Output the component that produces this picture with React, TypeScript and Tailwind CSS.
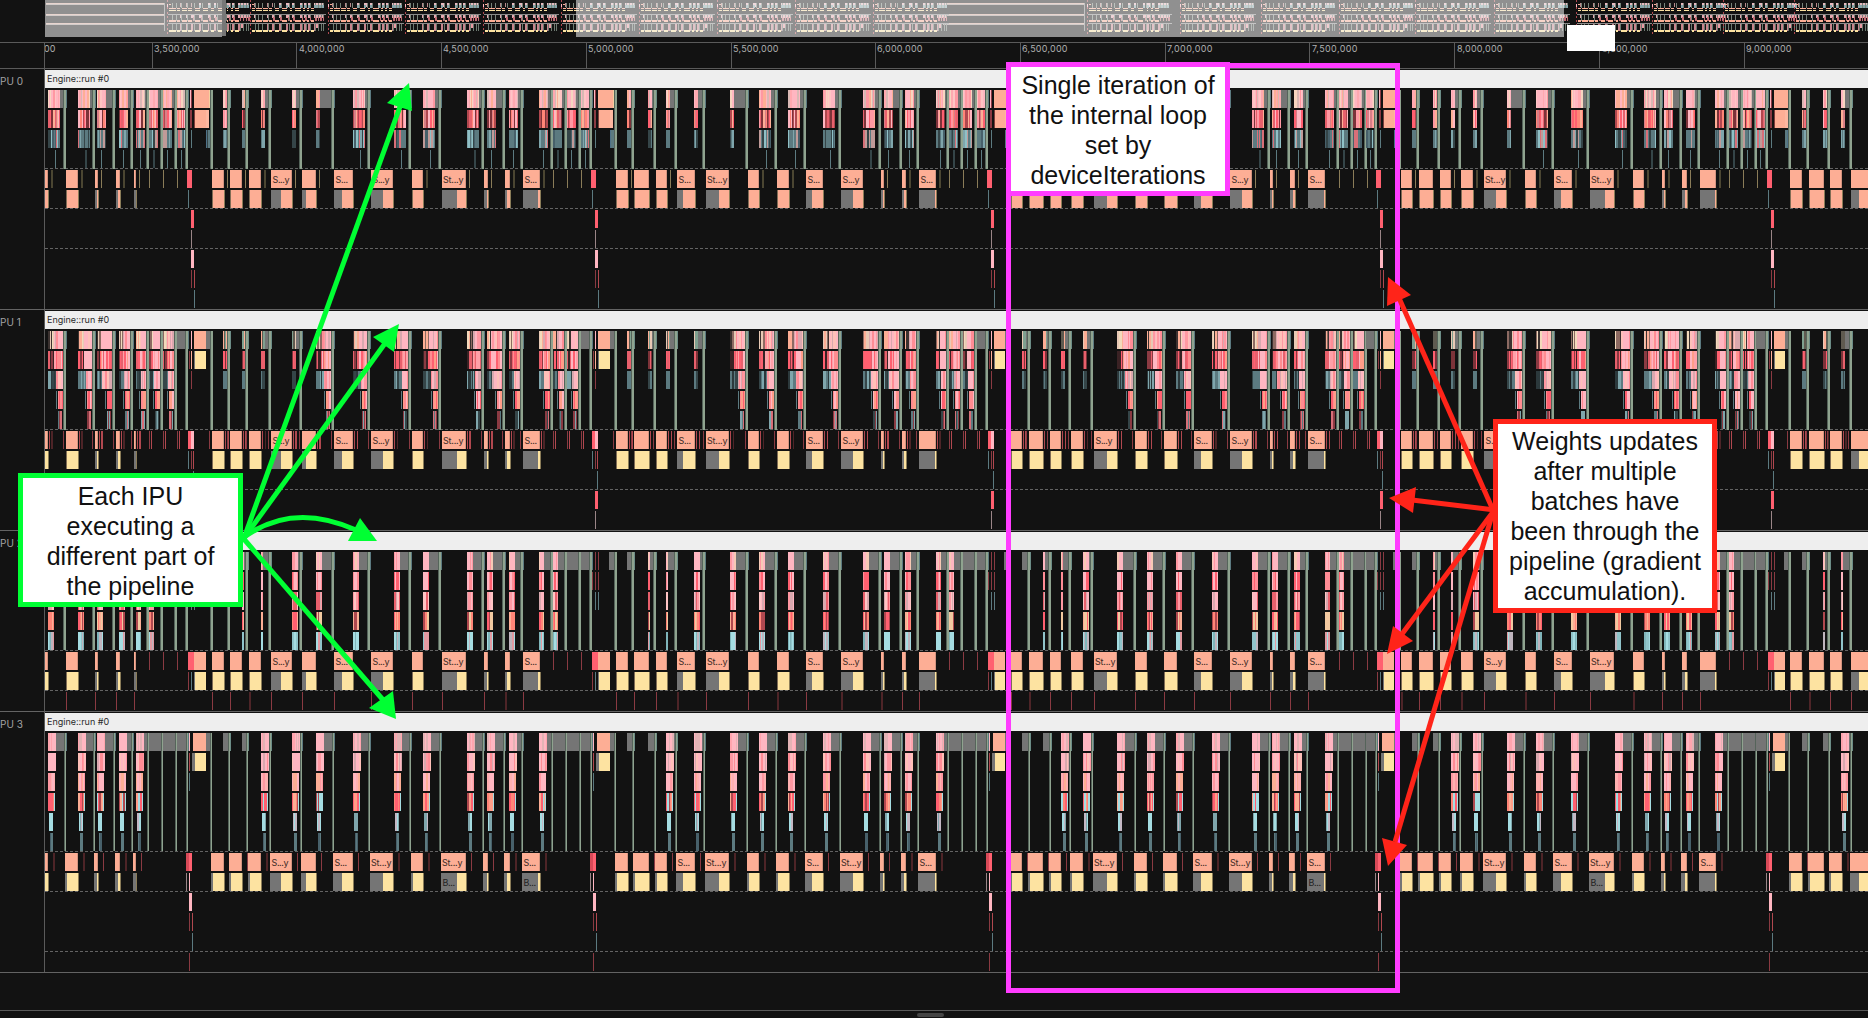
import React from 'react';

const C = {
  orange: '#fdae95',
  cream: '#fde3a1',
  gray: '#757575',
  green: '#8fa38f',
  greenDark: '#55645a',
  pink: '#ffb6c1',
  red: '#ff6070',
  teal: '#5c7a80',
  darkTeal: '#354548',
  cyan: '#a5dde2',
  darkRed: '#8a3a42',
  maroon: '#4d2427',
  olive: '#8a7c58',
  darkOlive: '#4b4632',
  bg: '#121212',
};

const FONT = 'Inter, "Liberation Sans", sans-serif';

// [position in the iteration, start, sync end]
type Slot = [number, number, number];
const SLOTS: Slot[] = [
  [7, 48, 66], [8, 78, 95], [9, 97, 115], [10, 119, 133], [11, 136, 149], [12, 149, 163], [13, 163, 177], [14, 177, 188],
  [0, 223, 230], [1, 242, 248], [2, 261, 271], [3, 292, 302], [4, 316, 334], [5, 353, 370], [6, 394, 411], [7, 423, 441],
  [8, 467, 484], [9, 487, 505], [10, 509, 523], [11, 539, 553], [12, 553, 567], [13, 567, 581], [14, 581, 592],
  [0, 627, 634], [1, 648, 656], [2, 666, 677], [3, 694, 705], [4, 730, 748], [5, 759, 777], [6, 788, 806], [7, 823, 841],
  [8, 863, 881], [9, 884, 902], [10, 905, 919], [11, 936, 949], [12, 949, 963], [13, 963, 977], [14, 977, 988],
  [0, 1022, 1030], [1, 1043, 1051], [2, 1061, 1071], [3, 1083, 1093], [4, 1117, 1136], [5, 1147, 1165], [6, 1176, 1194], [7, 1212, 1230],
  [8, 1252, 1270], [9, 1272, 1290], [10, 1294, 1308], [11, 1325, 1339], [12, 1339, 1353], [13, 1353, 1367], [14, 1366, 1377],
  [0, 1412, 1419], [1, 1433, 1440], [2, 1451, 1461], [3, 1473, 1483], [4, 1507, 1525], [5, 1536, 1554], [6, 1571, 1589], [7, 1615, 1633],
  [8, 1644, 1662], [9, 1664, 1682], [10, 1686, 1700], [11, 1715, 1729], [12, 1729, 1743], [13, 1743, 1757], [14, 1756, 1768],
  [0, 1802, 1809], [1, 1823, 1830], [2, 1841, 1852],
];

// start, end, end of the grey part of the lower row, label for each IPU
type Bar = [number, number, number, string[]?];
const BARS: Bar[] = [
  [45, 48, 0], [66, 78, 0], [95, 98, 97], [116, 120, 118], [134, 136, 136],
  [212, 224, 0], [230, 242, 0], [249, 261, 0], [271, 292, 281, ['S...y', 'S...y', 'S...y', 'S...y']],
  [302, 316, 306], [334, 353, 342, ['S...', 'S...', 'S...', 'S...']],
  [371, 393, 383, ['S...y', 'S...y', 'S...y', 'St...y']], [412, 423, 0],
  [442, 466, 457, ['St...y', 'St...y', 'St...y', 'St...y']], [484, 488, 487], [505, 510, 507],
  [523, 540, 538, ['S...', 'S...', 'S...', 'S...']],
  [616, 628, 0], [634, 649, 0], [656, 667, 0], [677, 695, 683, ['S...', 'S...', 'S...', 'S...']],
  [706, 729, 719, ['St...y', 'St...y', 'St...y', 'St...y']], [748, 759, 0], [777, 789, 0],
  [806, 823, 812, ['S...', 'S...', 'S...', 'S...']], [841, 863, 853, ['S...y', 'S...y', 'S...y', 'St...y']],
  [881, 884, 883], [902, 906, 904], [919, 936, 935, ['S...', '', '', 'S...']],
  [1011, 1022, 0], [1029, 1043, 0], [1050, 1061, 0], [1071, 1083, 0],
  [1094, 1117, 1107, ['St...y', 'S...y', 'St...y', 'St...y']], [1135, 1147, 0], [1164, 1177, 0],
  [1194, 1212, 1201, ['S...', 'S...', 'S...', 'S...']], [1230, 1252, 1242, ['S...y', 'S...y', 'S...y', 'St...y']],
  [1270, 1273, 1272], [1290, 1295, 1293], [1308, 1325, 1324, ['S...', 'S...', 'S...', 'S...']],
  [1401, 1412, 0], [1419, 1433, 0], [1440, 1451, 0], [1461, 1473, 0],
  [1484, 1506, 1496, ['St...y', 'S...', 'S...y', 'St...y']], [1525, 1536, 0],
  [1554, 1572, 1561, ['S...', 'S...', 'S...', 'S...']], [1590, 1614, 1605, ['St...y', 'St...y', 'St...y', 'St...y']],
  [1633, 1644, 0], [1662, 1665, 1664], [1682, 1687, 1685], [1700, 1716, 1715, ['', '', '', 'S...']],
  [1790, 1802, 0], [1809, 1824, 0], [1830, 1842, 0], [1851, 1869, 1859],
];
const BATCH_LABELS = [442, 523, 1308, 1590];

// weight update: start, end of the block, following sync
const UPDATES: [number, number, number][] = [
  [188, 206, 212], [592, 610, 616], [988, 1005, 1010], [1377, 1394, 1400], [1768, 1785, 1790],
];

const PAL = {
  top: ['#ffb6c1', '#ffb6c1', '#ffc4c4', '#fdae95', '#ff98a2', '#f7d5c0', '#ffb6c1', '#d9b8b4', '#ffa9b0'],
  reds: ['#e8606c', '#ff98a2', '#b0484f', '#fdae95', '#ff6070', '#ffb6c1', '#7c3339', '#ff8577', '#d87f86'],
  pinkRed: ['#ffb6c1', '#ff6070', '#ffb6c1', '#ff8c90', '#ffa0a8', '#ffb6c1', '#e8606c', '#ff9d88'],
  pinks: ['#ffb6c1', '#ffb6c1', '#ff98a2', '#ffb6c1', '#ffc0b8', '#ff8c95', '#ffb6c1', '#d9a8ae'],
  teals: ['#5c7a80', '#7fa6ac', '#354548', '#5c7a80', '#8fc0c6', '#5c7a80', '#d86f78', '#47606a', '#c09a98'],
  cyans: ['#7fb5ba', '#a5dde2', '#bfb4bd', '#a5dde2', '#90c4ca', '#e39aa2'],
  hot: ['#ff6070', '#ff8577', '#fdae95', '#ff6070', '#b0484f', '#ff9d88', '#a5dde2'],
};

function rnd(n: number) {
  const v = Math.sin(n * 127.1 + 311.7) * 43758.5453;
  return v - Math.floor(v);
}

function R({ x, y, w, f, h = 18, o }: { x: number; y: number; w: number; f: string; h?: number; o?: number }) {
  return <rect x={x} y={y} width={w} height={h} fill={f} opacity={o} />;
}

function Stripes({ x, y, w, p }: { x: number; y: number; w: number; p: string[] }) {
  const out = [];
  let cx = x;
  let k = 0;
  while (cx < x + w) {
    const r = rnd(x * 3.1 + y * 7.7 + k * 13.3);
    const sw = Math.min(r > 0.6 ? 2 : 1, x + w - cx);
    out.push(<R key={k} x={cx} y={y} w={sw} f={p[Math.floor(rnd(x + y * 1.3 + k * 5.9) * p.length)]} />);
    cx += sw;
    k++;
  }
  return <>{out}</>;
}

const SYNC_END = [100, 120, 119, 139];

function SlotShape({ slot, ipu }: { slot: Slot; ipu: number }) {
  const [i, s, g] = slot;
  const y = (r: number) => 21 + 20 * r;
  const sync = (
    <>
      <R x={g - (ipu === 3 ? 2 : 3)} y={21} w={1} h={SYNC_END[ipu] - 21} f={C.greenDark} />
      <R x={g - (ipu === 3 ? 1.5 : 2)} y={21} w={ipu === 3 ? 1 : 2} h={SYNC_END[ipu] - 21} f={C.green} />
      <R x={g} y={21} w={1} f={i > 2 ? '#5c7a80' : '#6c8c86'} />
    </>
  );
  if (ipu === 0) {
    const w = i < 5 ? 4 : i < 9 ? 12 : 9;
    return (
      <g>
        <R x={s} y={y(0)} w={g - s - 2} f={C.gray} />
        <Stripes x={s} y={y(0)} w={w} p={PAL.top} />
        <Stripes x={s} y={y(1)} w={w} p={PAL.reds} />
        <Stripes x={s} y={y(2)} w={w} p={i < 5 ? PAL.teals.slice(0, 4) : PAL.teals} />
        {i > 4 && <R x={s + (i < 9 ? 7 : 4)} y={y(3)} w={i % 4 === 0 ? 2 : 1} f={i % 4 === 0 ? C.darkTeal : C.teal} />}
        {sync}
      </g>
    );
  }
  if (ipu === 1) {
    if (i === 14) return <g><R x={s} y={y(0)} w={g - s} f={C.gray} />{sync}</g>;
    if (i < 4)
      return (
        <g>
          <R x={s} y={y(0)} w={g - s - 2} f={C.gray} />
          <Stripes x={s} y={y(0)} w={4} p={['#e8c9b5', '#fdae95', '#5f5a50', '#7fa08f']} />
          <Stripes x={s} y={y(1)} w={4} p={['#ff6070', '#7c3339', '#e8606c']} />
          <Stripes x={s} y={y(2)} w={4} p={['#5c7a80', '#354548', '#5c7a80']} />
          {sync}
        </g>
      );
    const wide = i < 9;
    return (
      <g>
        <Stripes x={s} y={y(0)} w={wide ? 6 : 4} p={['#f2d9bb', '#8c6a62', '#e8c9b5', '#3c3230', '#fdae95']} />
        <Stripes x={s + (wide ? 6 : 4)} y={y(0)} w={g - s - (wide ? 8 : 6)} p={PAL.pinks} />
        <Stripes x={s} y={y(1)} w={wide ? 6 : 4} p={['#e8606c', '#3a2224', '#ff6070', '#8a3a42']} />
        <Stripes x={s + (wide ? 6 : 4)} y={y(1)} w={g - s - (wide ? 9 : 7)} p={PAL.pinkRed} />
        <Stripes x={s} y={y(2)} w={wide ? 8 : 5} p={['#5c7a80', '#7fa6ac', '#2c393c', '#5c7a80', '#354548']} />
        <Stripes x={s + (wide ? 8 : 5)} y={y(2)} w={g - s - (wide ? 11 : 8)} p={PAL.pinks} />
        <R x={g - 10} y={y(3)} w={1} f={C.teal} />
        <Stripes x={g - 8} y={y(3)} w={5} p={['#ff6070', '#ff9d88', '#ffb6c1', '#ff8c90']} />
        <Stripes x={g - 8} y={y(4)} w={4} p={['#5c7a80', '#354548', '#8a3a42', '#d86f78', '#7fa6ac']} />
        {sync}
      </g>
    );
  }
  if (ipu === 2) {
    const has = i > 0 && i < 13;
    const w = i < 3 ? 2 : i > 10 ? 5 : 6;
    return (
      <g>
        <R x={s} y={y(0)} w={g - s} f={C.gray} />
        {has && (
          <>
            <Stripes x={s} y={y(0)} w={w} p={['#ffb6c1', '#ffb6c1', '#f7c9b5', '#ff98a2', '#ffb6c1']} />
            <Stripes x={s} y={y(1)} w={w} p={['#ff8c95', '#ffb6c1', '#ff6070', '#ffb6c1']} />
            <Stripes x={s} y={y(2)} w={w} p={['#ffb6c1', '#d9a8ae', '#ff98a2', '#e8606c', '#ffc4c4']} />
            <Stripes x={s} y={y(3)} w={w} p={['#ff8577', '#ff6070', '#fdae95', '#b0484f', '#f2c9a0']} />
            <Stripes x={s} y={y(4)} w={w} p={PAL.cyans} />
          </>
        )}
        {sync}
      </g>
    );
  }
  const has = i > 1 && i < 12;
  return (
    <g>
      <R x={s} y={y(0)} w={g - s} f={C.gray} />
      {has && (
        <>
          <Stripes x={s} y={y(0)} w={8} p={['#ffb6c1', '#ffb6c1', '#ffb6c1', '#ffa5ae', '#e3b3b5']} />
          <Stripes x={s} y={y(1)} w={8} p={PAL.pinks} />
          <Stripes x={s} y={y(2)} w={7} p={['#ffb6c1', '#ff98a2', '#ffb0b0', '#fdae95', '#ffb6c1']} />
          <Stripes x={s} y={y(3)} w={6} p={PAL.hot} />
          <R x={s + 6} y={y(3)} w={1} f={C.cyan} />
          <Stripes x={s + 1} y={y(4)} w={4} p={['#a5dde2', '#a5dde2', '#c4b8c4', '#7fa6ac']} />
          <Stripes x={s + 2} y={y(5)} w={3} p={['#5c7a80', '#5c7a80', '#47606a']} />
        </>
      )}
      {sync}
    </g>
  );
}

const BAR_Y = [101, 121, 121, 141];

function BarShape({ bar, ipu }: { bar: Bar; ipu: number }) {
  const [a, b, g, labels] = bar;
  const y = BAR_Y[ipu];
  const x0 = ipu === 3 && a > 48 ? a - 1 : a;
  const fill = ipu === 0 ? C.orange : C.cream;
  const label = labels?.[ipu];
  return (
    <g>
      <R x={x0} y={y} w={b - x0} f={C.orange} />
      <R x={b - 1} y={y} w={1} f="#a9786a" o={0.5} />
      {g > 0 && <R x={x0 - 0.5} y={y + 20} w={g - x0 + 0.5} f={C.gray} />}
      {g === 0 && a > 48 && <R x={x0} y={y + 20} w={2} f={ipu === 3 ? C.gray : '#7f6c55'} />}
      <R x={g > 0 ? g : a > 48 ? a + 1 : a} y={y + 20} w={b - (g > 0 ? g : a > 48 ? a + 1 : a)} f={fill} />
      <R x={b} y={y + 20} w={1} f="#8a7c58" />
      {ipu === 0 && a < 1780 && <R x={b + 3} y={y} w={b % 3 === 0 ? 2 : 1} f={b % 3 === 0 ? C.darkOlive : C.olive} o={a > 200 && b - a > 12 && b % 2 ? 0 : 1} />}
      {ipu === 1 && (
        <>
          <R x={b + 1} y={y} w={1} f="#b0484f" />
          <R x={b + (b % 2 ? 4 : 3)} y={y} w={b % 2 ? 1 : 2} f={b % 3 ? '#b0484f' : C.maroon} />
          <R x={a - 3} y={y} w={1} f={C.darkRed} />
        </>
      )}
      {ipu === 2 && a > 60 && <R x={a} y={y + 40} w={a % 4 === 1 ? 2 : 1} f={a % 4 === 1 ? C.maroon : C.darkRed} />}
      {ipu === 3 && <R x={b + 5} y={y} w={b % 3 === 0 ? 2 : 1} f={b % 3 === 0 ? C.maroon : C.darkRed} />}
      {label && (
        <text x={x0 + (label === 'St...y' ? 1 : 1.5)} y={y + 12.5} fontSize={9} fill="#3b2a26" fontFamily={FONT} textLength={label === 'St...y' ? 20.5 : label === 'S...y' ? 17 : 12.5}>
          {label}
        </text>
      )}
      {ipu === 3 && BATCH_LABELS.includes(a) && (
        <text x={x0 + 1.5} y={y + 32.5} fontSize={9} fill="#222" fontFamily={FONT} textLength={12.5}>B...</text>
      )}
    </g>
  );
}

function UpdateShape({ u, ipu }: { u: [number, number, number]; ipu: number }) {
  const [x, e, g] = u;
  const b = BAR_Y[ipu];
  const end = SYNC_END[ipu];
  const sync = (
    <>
      <R x={g - 2} y={21} w={1} h={end - 21} f={C.greenDark} />
      <R x={g - 1.5} y={21} w={ipu === 3 ? 1 : 2} h={end - 21} f={C.green} />
    </>
  );
  if (ipu === 0)
    return (
      <g>
        <R x={x + 2} y={21} w={2} f={C.pink} /><R x={x + 3} y={21} w={1} f={C.darkRed} />
        <R x={x + 2} y={41} w={2} f={C.darkRed} /><R x={x + 3} y={61} w={1} f={C.teal} />
        <R x={x + 6} y={21} w={e + 3 - x - 6} f={C.orange} /><R x={e + 3} y={21} w={2} f="#f5cf9f" />
        <R x={x + 7} y={41} w={e - x - 7} f={C.orange} /><R x={e} y={41} w={3} f="#fdb7a0" /><R x={x + 6} y={41} w={1} f="#7a3c3a" />
        <Stripes x={e} y={61} w={4} p={['#5c7a80', '#354548', '#4f7288']} />
        {sync}
        <R x={x - 1} y={b} w={5} f={C.red} /><R x={x} y={b + 20} w={1} f={C.teal} />
        <R x={x + 3} y={141} w={3} f={C.red} /><R x={x + 3} y={161} w={1} f="#9a8587" />
        <R x={x + 3} y={181} w={3} f={C.pink} />
        <R x={x + 3} y={201} w={1} f={C.darkRed} /><R x={x + 6} y={201} w={1} f="#b0484f" />
        <R x={x + 6} y={221} w={1} f={C.teal} />
      </g>
    );
  if (ipu === 1)
    return (
      <g>
        <R x={x + 3} y={21} w={1} f={C.pink} /><R x={x + 1} y={41} w={1} f={C.darkRed} /><R x={x + 3} y={41} w={1} f={C.orange} /><R x={x + 3} y={61} w={1} f={C.darkRed} />
        <R x={x + 6} y={21} w={e - x - 6} f={C.orange} /><R x={e} y={21} w={g - e} f={C.gray} />
        <R x={x + 6} y={41} w={1} f={C.gray} /><R x={x + 7} y={41} w={e - x - 7} f={C.cream} />
        {sync}
        <R x={x} y={b} w={3} f={C.red} /><R x={x + 3} y={b} w={3} f={C.pink} />
        <R x={x} y={b + 20} w={1} f={C.teal} /><R x={x + 3} y={b + 20} w={1} f={C.darkRed} /><R x={x + 5} y={b + 20} w={1} f="#b0484f" />
        <R x={x + 5} y={b + 40} w={1} f={C.teal} />
        <R x={x + 3} y={b + 60} w={3} f={C.red} /><R x={x + 3} y={b + 80} w={1} f="#9a8587" />
        <R x={g + 5} y={b} w={1} f={C.darkRed} />
      </g>
    );
  if (ipu === 2)
    return (
      <g>
        <R x={x} y={41} w={1} f={C.darkRed} />
        {[21, 41].map((y) => <g key={y}><R x={x + 3} y={y} w={1} f={C.darkRed} /><R x={x + 6} y={y} w={1} f={C.darkRed} /></g>)}
        <R x={x + 3} y={61} w={1} f={C.teal} /><R x={x + 6} y={61} w={1} f={C.teal} />
        <R x={e - 1} y={21} w={g - e} f={C.gray} />
        {sync}
        <R x={x} y={b} w={6} f={C.red} /><R x={x + 6} y={b} w={e - x - 6} f={C.orange} />
        <R x={x} y={b + 20} w={1} f={C.darkRed} /><R x={x + 3} y={b + 20} w={1} f={C.teal} />
        <R x={x + 6} y={b + 20} w={1} f={C.gray} /><R x={x + 7} y={b + 20} w={e - x - 7} f={C.cream} />
      </g>
    );
  return (
    <g>
      <R x={x - 2} y={41} w={1} f={C.darkRed} /><R x={x + 1} y={21} w={1} f={C.pink} /><R x={x + 1} y={41} w={1} f="#b0484f" /><R x={x + 1} y={61} w={1} f={C.teal} />
      <R x={x + 5} y={21} w={e - x - 5} f={C.orange} /><R x={e} y={21} w={g - e - 2} f={C.gray} />
      <R x={x + 4} y={41} w={3} f={C.gray} /><R x={x + 7} y={41} w={e - x - 7} f={C.cream} />
      {sync}
      <R x={x - 2} y={b} w={3} f="#d84a58" /><R x={x + 1} y={b} w={3} f={C.red} />
      <R x={x - 2} y={b + 20} w={1} f="#9a8587" /><R x={x + 1} y={b + 20} w={1} f={C.pink} />
      <R x={x + 1} y={b + 40} w={3} f={C.pink} />
      <R x={x + 1} y={b + 60} w={1} f={C.darkRed} /><R x={x + 4} y={b + 60} w={1} f="#b0484f" />
      <R x={x + 4} y={b + 80} w={1} f={C.teal} /><R x={x + 1} y={b + 100} w={1} f={C.darkRed} />
    </g>
  );
}

const DASHES = [[99, 139, 179], [119, 179], [119, 159], [139, 179, 239]];
const HEIGHTS = [241, 221, 181, 261];

function Ipu({ n }: { n: number }) {
  const h = HEIGHTS[n];
  const sectionClass = ['h-[241px]', 'h-[221px]', 'h-[181px]', 'h-[261px]'][n];
  return (
    <section className={`${sectionClass} flex w-full shrink-0 border-b border-[#636363]`}>
      <aside className="w-[45px] shrink-0 border-r border-[#5a5a5a] pt-[6px] text-[10px] leading-[13px] whitespace-nowrap text-[#a3a3a3]">
        PU {n}
      </aside>
      <div className="flex min-w-0 flex-1 flex-col">
        <div className="mt-px h-[18px] shrink-0 bg-[#eeeeee] pl-[2px] text-[9px] leading-[18px] text-[#2a2a2a]">Engine::run #0</div>
        <svg className="block shrink-0" width={1823} height={h - 20} viewBox={`45 19 1823 ${h - 20}`} shapeRendering="crispEdges">
          {DASHES[n].map((y) => (
            <line key={y} x1={45} x2={1868} y1={y + 0.5} y2={y + 0.5} stroke="#636363" strokeDasharray="3 2" />
          ))}
          {UPDATES.map((u) => <UpdateShape key={u[0]} u={u} ipu={n} />)}
          {SLOTS.map((s) => <SlotShape key={s[1]} slot={s} ipu={n} />)}
          {BARS.map((b) => <BarShape key={b[0]} bar={b} ipu={n} />)}
          {n !== 3 && [149, 163, 177, 553, 567, 581, 949, 963, 977, 1339, 1353, 1367, 1729, 1743, 1757].map((x) => (
            <g key={x}>
              <R x={x} y={BAR_Y[n]} w={1} f={n === 0 ? C.olive : C.darkRed} />
              {n === 1 && <R x={x + 2} y={BAR_Y[n]} w={1} f="#b0484f" />}
            </g>
          ))}
        </svg>
      </div>
    </section>
  );
}

const MINI_STARTS = [251, 329, 406, 484, 562, 640, 718, 796, 874, 1181, 1262, 1340, 1416, 1495, 1577, 1653, 1724, 1795];
const ITERATION = SLOTS.slice(8, 23);
const ITERATION_BARS = BARS.slice(5, 17);

function MiniIteration({ x, w }: { x: number; w: number }) {
  const k = w / 400;
  const m = (v: number) => x + (v - 205) * k;
  return (
    <g>
      {ITERATION.map(([i, s, g]) => {
        const a = m(s);
        return (
          <g key={s}>
            <R x={a} y={3} w={i < 5 ? 1 : 2.4} h={4} f={i < 5 ? '#b98b8c' : '#e8b9bf'} />
            <R x={m(g) - 1} y={3} w={1} h={5} f="#78847a" />
            <R x={a} y={5} w={i < 5 ? 0 : 2} h={3} f="#86a6ab" />
            <R x={a} y={14} w={i < 4 ? 0.8 : 2.6} h={4} f="#e3a9b0" />
            <R x={m(g) - 1} y={14} w={1} h={7} f="#78847a" />
            <R x={a + 1.5} y={17} w={i < 4 ? 0 : 1.4} h={4} f="#c46b74" />
            {i > 0 && i < 13 && <R x={a} y={24} w={1.5} h={4} f="#e89aa3" />}
            {i > 1 && i < 12 && <R x={a} y={24} w={1.8} h={7} f="#c9858d" />}
            <R x={m(g) - 1} y={24} w={1} h={7} f="#6d7a70" />
          </g>
        );
      })}
      <R x={x} y={14} w={w} h={0.8} f="#8a8a8a" />
      <R x={x} y={23} w={w} h={0.8} f="#8a8a8a" />
      {ITERATION_BARS.map(([a, b]) => (
        <g key={a}>
          <R x={m(a)} y={8} w={(b - a) * k + 0.6} h={1} f={C.orange} />
          <R x={m(a)} y={10} w={(b - a) * k + 0.6} h={1} f={C.cream} />
          <R x={m(a)} y={20} w={(b - a) * k + 0.6} h={2} f={C.orange} />
          <R x={m(a)} y={30} w={(b - a) * k + 0.6} h={2} f={C.cream} />
        </g>
      ))}
      {[0, 4, 7, 12, 16, 20, 24, 28, 32].map((y) => (
        <R key={y} x={x - 1} y={y} w={1} h={y === 4 ? 4 : 2} f={y === 4 ? C.pink : '#b0484f'} />
      ))}
      <R x={x + 1} y={4} w={2} h={1} f={C.orange} />
    </g>
  );
}

function Overview() {
  return (
    <svg className="block" width={1823} height={37} viewBox="45 0 1823 37" shapeRendering="crispEdges">
      {[[46, 118], [943, 141]].map(([x, w]) =>
        [3, 14, 23].map((y) => (
          <g key={`${x}-${y}`}>
            <R x={x} y={y} w={w} h={1} f="#d8aea0" />
            <R x={x} y={y + 1} w={w} h={1} f="#a89c96" />
          </g>
        )),
      )}
      {[164, 1084].map((x) => (
        <g key={x}>
          <MiniIteration x={x + 4} w={84} />
          <R x={x} y={3} w={1} h={28} f="#8a8a8a" />
        </g>
      ))}
      {MINI_STARTS.map((x) => <MiniIteration key={x} x={x} w={75} />)}
      <rect x={45} y={0} width={177} height={37} fill="#f4f4f4" opacity={0.56} />
      <rect x={222} y={0} width={4} height={36} fill="#777" />
      <rect x={576} y={0} width={988} height={37} fill="#f4f4f4" opacity={0.56} />
    </svg>
  );
}

const TICKS: [number, string, number][] = [
  [152, '3,500,000', 2], [296, '4,000,000', 3], [441, '4,500,000', 2], [586, '5,000,000', 2], [731, '5,500,000', 2], [875, '6,000,000', 2],
  [1020, '6,500,000', 2], [1165, '7,000,000', 2], [1309, '7,500,000', 3], [1454, '8,000,000', 3], [1599, '8,500,000', 3], [1744, '9,000,000', 2],
];

function Axis() {
  return (
    <svg className="block" width={1823} height={25} viewBox="45 43 1823 25">
      <text x={10} y={52} fontSize={9} fill="#b0b0b0" fontFamily={FONT} textLength={45.5}>3,000,000</text>
      {TICKS.map(([x, t, d]) => (
        <g key={x}>
          <rect x={x} y={43} width={1} height={25} fill="#5a5a5a" />
          <text x={x + d} y={52} fontSize={9} fill="#b0b0b0" fontFamily={FONT} textLength={45.5}>{t}</text>
        </g>
      ))}
    </svg>
  );
}

function Arrows() {
  return (
    <svg className="pointer-events-none absolute inset-0" width={1868} height={1018} viewBox="0 0 1868 1018" fill="none">
      <g stroke="#00ff33" strokeWidth={5}>
        <path d="M244 538 L401 104" />
        <path d="M244 538 L386 342" />
        <path d="M243 538 C278 512 316 512 356 530" />
        <path d="M243 538 L384 701" />
      </g>
      <g fill="#00ff33">
        <path d="M409 83 L387 103 L412 111 Z" />
        <path d="M399 324 L373 337 L394 352 Z" />
        <path d="M377 541 L360 518 L348 541 Z" />
        <path d="M396 719 L369 708 L393 691 Z" />
      </g>
      <g stroke="#ff2419" strokeWidth={5}>
        <path d="M1493 510 L1399 298" />
        <path d="M1495 510 L1412 500" />
        <path d="M1493 512 L1402 634" />
        <path d="M1493 512 L1395 842" />
      </g>
      <g fill="#ff2419">
        <path d="M1388 277 L1411 295 L1387 306 Z" />
        <path d="M1389 498 L1416 487 L1413 513 Z" />
        <path d="M1387 654 L1393 626 L1413 641 Z" />
        <path d="M1388 866 L1382 838 L1407 845 Z" />
      </g>
    </svg>
  );
}

function Callout({ className, lines }: { className: string; lines: string[] }) {
  return (
    <div className={`absolute flex flex-col items-center justify-center border-[5px] bg-white text-center font-['Liberation_Sans',Arial,sans-serif] text-[25px] leading-[30px] whitespace-nowrap text-[#111] ${className}`}>
      {lines.map((l) => <span key={l}>{l}</span>)}
    </div>
  );
}

export default function App() {
  return (
    <div className="relative flex h-[1018px] w-[1868px] flex-col overflow-hidden bg-[#121212] font-[Inter,'Liberation_Sans',sans-serif]">
      <div className="h-[42px] shrink-0 pl-[45px]"><Overview /></div>
      <div className="flex h-[27px] shrink-0 border-y border-[#5a5a5a]">
        <div className="w-[45px] shrink-0 border-r border-[#5a5a5a]" />
        <Axis />
      </div>
      {[0, 1, 2, 3].map((n) => <Ipu key={n} n={n} />)}
      <div className="h-[37px] shrink-0" />
      <footer className="flex h-2 shrink-0 items-end border-t border-[#5a5a5a] pl-[917px]">
        <div className="mb-px h-1 w-[27px] rounded-sm bg-[#444]" />
      </footer>

      <div className="absolute top-[25px] left-[1567px] h-[26px] w-12 bg-white" />
      <div className="absolute top-[63px] left-[1006px] h-[930px] w-[394px] border-[5px] border-[#ff3cff]" />
      <Arrows />
      <Callout className="top-[62px] left-[1006px] h-[134px] w-[224px] border-[#ff3cff] pt-px" lines={['Single iteration of', 'the internal loop', 'set by', 'deviceIterations']} />
      <Callout className="top-[473px] left-[18px] h-[134px] w-[225px] border-[#00ff33] pt-px" lines={['Each IPU', 'executing a', 'different part of', 'the pipeline']} />
      <Callout className="top-[419px] left-[1493px] h-[194px] w-[224px] border-[#ff2419] pb-px" lines={['Weights updates', 'after multiple', 'batches have', 'been through the', 'pipeline (gradient', 'accumulation).']} />
    </div>
  );
}
